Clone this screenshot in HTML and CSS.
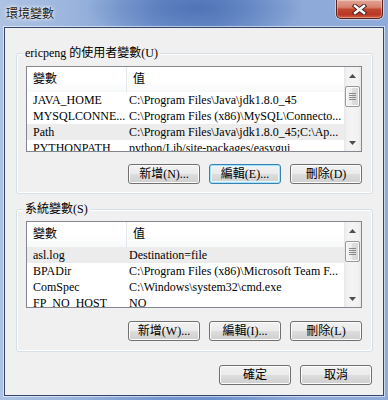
FILE: index.html
```html
<!DOCTYPE html>
<html>
<head>
<meta charset="utf-8">
<link rel="stylesheet" href="styles.css">
</head>
<body>
<div class="window">
  <div class="titlebar">
    <span class="title">環境變數</span>
    <div class="close">
      <svg width="15" height="11" viewBox="0 0 15 11">
        <path d="M3 2 L12 9 M12 2 L3 9" stroke="#4a2520" stroke-width="4.4" stroke-linecap="square" fill="none"/>
        <path d="M3 2 L12 9 M12 2 L3 9" stroke="#fff" stroke-width="2.4" stroke-linecap="square" fill="none"/>
      </svg>
    </div>
  </div>
  <div class="client">
    <div class="group g1">
      <span class="legend">ericpeng 的使用者變數(U)</span>
      <div class="list">
        <div class="table">
          <div class="header"><div class="c1">變數</div><div class="c2">值</div></div>
          <div class="row"><div class="c1">JAVA_HOME</div><div class="c2">C:\Program Files\Java\jdk1.8.0_45</div></div>
          <div class="row"><div class="c1">MYSQLCONNE...</div><div class="c2">C:\Program Files (x86)\MySQL\Connecto...</div></div>
          <div class="row sel"><div class="c1">Path</div><div class="c2">C:\Program Files\Java\jdk1.8.0_45;C:\Ap...</div></div>
          <div class="row"><div class="c1">PYTHONPATH</div><div class="c2">python/Lib/site-packages/easygui</div></div>
        </div>
        <div class="sb">
          <div class="sb-btn"><svg width="7" height="4" viewBox="0 0 7 4"><path d="M3.5 0 L7 4 L0 4 Z" fill="#4d4d4d"/></svg></div>
          <div class="thumb"><span></span><span></span><span></span><span></span></div>
          <div class="sb-space"></div>
          <div class="sb-btn"><svg width="7" height="4" viewBox="0 0 7 4"><path d="M0 0 L7 0 L3.5 4 Z" fill="#4d4d4d"/></svg></div>
        </div>
      </div>
      <div class="btns">
        <button class="btn">新增(N)...</button>
        <button class="btn focus">編輯(E)...</button>
        <button class="btn">刪除(D)</button>
      </div>
    </div>
    <div class="group g2">
      <span class="legend">系統變數(S)</span>
      <div class="list">
        <div class="table">
          <div class="header"><div class="c1">變數</div><div class="c2">值</div></div>
          <div class="row sel"><div class="c1">asl.log</div><div class="c2">Destination=file</div></div>
          <div class="row"><div class="c1">BPADir</div><div class="c2">C:\Program Files (x86)\Microsoft Team F...</div></div>
          <div class="row"><div class="c1">ComSpec</div><div class="c2">C:\Windows\system32\cmd.exe</div></div>
          <div class="row"><div class="c1">FP_NO_HOST</div><div class="c2">NO</div></div>
        </div>
        <div class="sb">
          <div class="sb-btn"><svg width="7" height="4" viewBox="0 0 7 4"><path d="M3.5 0 L7 4 L0 4 Z" fill="#4d4d4d"/></svg></div>
          <div class="thumb"><span></span><span></span><span></span><span></span></div>
          <div class="sb-space"></div>
          <div class="sb-btn"><svg width="7" height="4" viewBox="0 0 7 4"><path d="M0 0 L7 0 L3.5 4 Z" fill="#4d4d4d"/></svg></div>
        </div>
      </div>
      <div class="btns">
        <button class="btn">新增(W)...</button>
        <button class="btn">編輯(I)...</button>
        <button class="btn">刪除(L)</button>
      </div>
    </div>
    <div class="btns dialog">
      <button class="btn">確定</button>
      <button class="btn">取消</button>
    </div>
  </div>
</div>
</body>
</html>
```
FILE: styles.css
```css
* { box-sizing: border-box; }
html, body { margin: 0; padding: 0; }
body {
  width: 388px;
  height: 400px;
  overflow: hidden;
  font: 12px/16px "Liberation Serif", "Noto Sans CJK TC", serif;
  color: #000;
}
.window {
  width: 388px;
  height: 400px;
  display: flex;
  flex-direction: column;
  background:
    radial-gradient(ellipse 110px 34px at 195px 8px, rgba(70,105,175,0.75), rgba(70,105,175,0)),
    linear-gradient(90deg, #aec3e3 0%, #9bb5dd 18%, #7396cf 42%, #6d91cc 55%, #8eaad8 78%, #8fabda 100%);
}
.titlebar {
  height: 27px;
  display: flex;
  justify-content: space-between;
  align-items: flex-start;
}
.title {
  padding: 6px 0 0 6px;
  line-height: 14px;
  font-family: "Noto Sans CJK TC", sans-serif;
  font-size: 12px;
  color: #1a1a1a;
  text-shadow: 0 0 5px #fff, 0 0 3px rgba(255,255,255,0.9);
}
.close {
  width: 47px;
  height: 19px;
  margin-right: 5px;
  border: 1px solid #5a1f18;
  border-top: none;
  border-radius: 0 0 5px 5px;
  background: linear-gradient(#e3a594 0%, #d7826e 40%, #c2472f 52%, #b83523 80%, #d2603f 100%);
  box-shadow: inset 0 0 0 1px rgba(255,255,255,0.35), 0 0 0 1px rgba(255,255,255,0.45);
  display: flex;
  align-items: center;
  justify-content: center;
}
.client {
  margin: 0 4px;
  height: 369px;
  border: 1px solid #33456a;
  background: #f0f0f0;
  box-shadow: 0 0 0 1px rgba(255,255,255,0.55);
  padding: 0 10px 0 11px;
  display: flex;
  flex-direction: column;
}
.group {
  position: relative;
  border: 1px solid #d5dfe5;
  border-radius: 3px;
  box-shadow: inset 0 0 0 1px #fff;
  padding: 12px 10px 0 9px;
}
.g1 { margin-top: 25px; height: 141px; }
.g2 { margin-top: 15px; height: 143px; padding-top: 11px; }
.legend {
  position: absolute;
  left: 6px;
  top: -9px;
  padding: 0 2px;
  background: #f0f0f0;
  line-height: 16px;
  white-space: nowrap;
}
.list {
  height: 86px;
  border: 1px solid #828790;
  background: #fff;
  display: flex;
}
.g2 .list { height: 87px; }
.table {
  flex: 1;
  overflow: hidden;
  min-width: 0;
}
.header {
  height: 25px;
  display: flex;
  background: linear-gradient(#ffffff 0%, #ffffff 55%, #f7f8f9 100%);
  line-height: 25px;
}
.header .c1 {
  width: 100px;
  padding-left: 6px;
  border-right: 1px solid #e3e8ee;
}
.header .c2 { padding-left: 6px; }
.row {
  height: 16px;
  display: flex;
  line-height: 16px;
  white-space: nowrap;
}
.row .c1 { width: 100px; flex: none; padding-left: 6px; }
.row .c2 { padding-left: 2px; }
.row.sel { background: #ececec; }
.sb {
  width: 17px;
  flex: none;
  display: flex;
  flex-direction: column;
  background: linear-gradient(90deg, #e6e6e6 0%, #f1f1f1 15%, #f4f4f4 50%, #f1f1f1 85%, #e6e6e6 100%);
}
.sb-btn {
  height: 17px;
  display: flex;
  align-items: center;
  justify-content: center;
}
.sb-space { flex: 1; }
.thumb {
  margin: 2px 1px 0;
  height: 21px;
  border: 1px solid #979797;
  border-radius: 2px;
  background: linear-gradient(90deg, #f4f4f4 0%, #ececec 50%, #dedede 50%, #d6d6d6 100%);
  box-shadow: inset 0 0 0 1px #fafafa;
  display: flex;
  flex-direction: column;
  align-items: center;
  justify-content: center;
  gap: 1px;
}
.thumb span {
  width: 7px;
  height: 1px;
  background: #8a8a8a;
}
.btns {
  display: flex;
  justify-content: flex-end;
  gap: 9px;
  margin-top: 12px;
}
.g2 .btns { margin-top: 13px; }
.dialog { margin-top: 13px; padding-right: 1px; }
.btn {
  width: 72px;
  height: 20px;
  padding: 0;
  border: 1px solid #707070;
  border-radius: 3px;
  background: linear-gradient(#f2f2f2 0%, #ebebeb 48%, #dddddd 52%, #cfcfcf 100%);
  box-shadow: inset 0 0 0 1px #fcfcfc;
  font: 12px/16px "Liberation Serif", "Noto Sans CJK TC", serif;
  color: #000;
  text-align: center;
}
.btn.focus {
  border-color: #3c7fb1;
  box-shadow: inset 0 0 0 1px #9ee3fb, inset 0 0 0 2px #e6f6fd;
}
```
